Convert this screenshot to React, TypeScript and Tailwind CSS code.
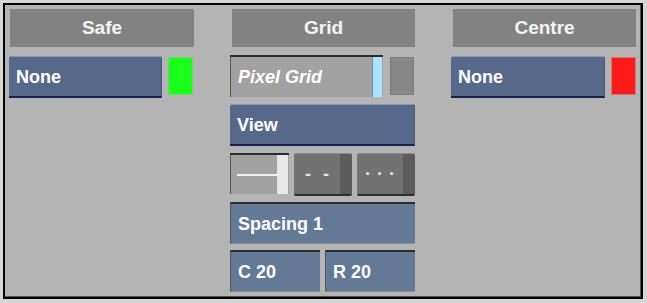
import React from "react";

const font = { fontFamily: '"Liberation Sans", Arial, sans-serif' };

function Header({ label, ml }: { label: string; ml: string }) {
  return (
    <div
      className={`h-[38px] ${ml} bg-[#828282] flex items-center justify-center pt-[1px] text-[19px] font-bold text-[#f4f4f4]`}
    >
      {label}
    </div>
  );
}

function BlueButton({ label, className }: { label: string; className: string }) {
  return (
    <div
      className={`${className} bg-[#56698a] rounded-t-[2px] border-t border-t-[#8597b3] border-b-2 border-b-[#1e1f4c] border-r border-r-[#4a5b7a] flex items-center pl-[7px] pt-[2px] text-[18px] font-bold text-white`}
    >
      {label}
    </div>
  );
}

function Field({ label, className }: { label: string; className: string }) {
  return (
    <div
      className={`${className} bg-[#637a97] border-t-2 border-t-[#2c2c2c] border-l border-l-[#555] border-b border-b-[#8a8a8a] flex items-center pl-[7px] pt-[1px] text-[18px] font-bold text-white`}
    >
      {label}
    </div>
  );
}

export default function App() {
  return (
    <div className="w-[647px] h-[303px] bg-[#d6d6d6] pt-[3px] pl-[3px]" style={font}>
      <div className="w-[640px] h-[296px] border-2 border-black bg-[#b4b4b4] shadow-[inset_-1px_-1px_0_#555] pt-[4px] pl-[4px] flex gap-[36px]">
        {/* Safe */}
        <div className="w-[185px] flex flex-col">
          <Header label="Safe" ml="ml-[1px]" />
          <div className="mt-[9px] h-[42px] flex gap-[6px]">
            <BlueButton label="None" className="w-[153px] h-[42px]" />
            <div className="w-[25px] h-[38px] mt-[1px] bg-[#1aff1a] border border-[#7acc7a]" />
          </div>
        </div>

        {/* Grid */}
        <div className="w-[185px] flex flex-col">
          <Header label="Grid" ml="ml-[2px]" />
          <div className="mt-[8px] h-[42px] flex gap-[7px]">
            <div className="w-[153px] h-[42px] bg-[#a2a2a2] border-t-2 border-t-[#2c2c2c] border-l border-l-[#555] flex items-center pl-[7px] pt-[1px] text-[18px] font-bold italic text-white relative">
              Pixel Grid
              <div className="absolute right-[1px] top-0 bottom-0 w-[10px] bg-[#a8e2fb] border-l border-[#6f8fa0]" />
            </div>
            <div className="w-[24px] h-[38px] mt-[2px] bg-[#878787] border border-[#7a7a7a]" />
          </div>
          <BlueButton label="View" className="mt-[7px] w-[185px] h-[42px]" />
          <div className="mt-[7px] h-[43px] flex gap-[5px]">
            <div className="w-[59px] h-[41px] bg-[#a2a2a2] border-t-2 border-t-[#2c2c2c] border-l border-l-[#555] flex items-center relative">
              <div className="ml-[6px] w-[40px] h-[2px] bg-[#f2f2f2]" />
              <div className="absolute right-[1px] top-0 bottom-0 w-[11px] bg-[#e8e8e8]" />
            </div>
            <div className="w-[58px] h-[43px] flex rounded-[2px] overflow-hidden border-b-2 border-b-[#2e2e2e] border-t border-t-[#8a8a8a]">
              <div className="flex-1 bg-[#727272] flex items-center justify-center gap-[12px] text-[18px] font-bold text-[#e4e4e4]">
                <span>-</span>
                <span>-</span>
              </div>
              <div className="w-[12px] bg-[#5c5c5c]" />
            </div>
            <div className="w-[58px] h-[43px] flex rounded-[2px] overflow-hidden border-b-2 border-b-[#2e2e2e] border-t border-t-[#8a8a8a]">
              <div className="flex-1 bg-[#727272] flex items-center justify-center gap-[6px] text-[18px] font-bold text-[#e4e4e4]">
                <span>·</span>
                <span>·</span>
                <span>·</span>
              </div>
              <div className="w-[12px] bg-[#5c5c5c]" />
            </div>
          </div>
          <Field label="Spacing 1" className="mt-[6px] w-[185px] h-[42px]" />
          <div className="mt-[6px] flex gap-[5px]">
            <Field label="C 20" className="w-[90px] h-[42px]" />
            <Field label="R 20" className="w-[90px] h-[42px]" />
          </div>
        </div>

        {/* Centre */}
        <div className="w-[185px] flex flex-col">
          <Header label="Centre" ml="ml-[2px]" />
          <div className="mt-[9px] h-[42px] flex gap-[6px]">
            <BlueButton label="None" className="w-[154px] h-[42px]" />
            <div className="w-[25px] h-[38px] mt-[1px] bg-[#ff1a1a] border border-[#cc7a7a]" />
          </div>
        </div>
      </div>
    </div>
  );
}
